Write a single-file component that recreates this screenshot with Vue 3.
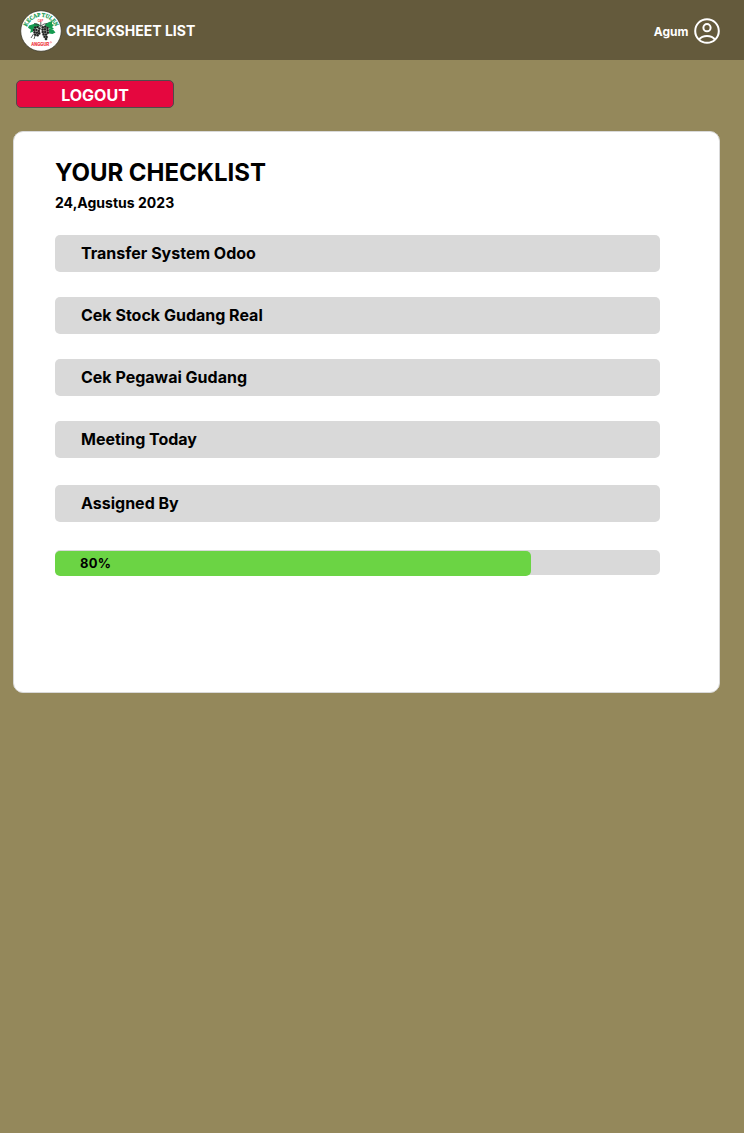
<script setup>
const tasks = [
  'Transfer System Odoo',
  'Cek Stock Gudang Real',
  'Cek Pegawai Gudang',
  'Meeting Today',
  'Assigned By',
]
const progress = 80
const fillWidth = '476px'
const grapes = [
  [15.2, 17.6], [17.6, 17], [19.4, 18.6], [14, 20], [16.4, 20], [18.8, 21], [14.6, 22.4], [17, 22.8],
  [19.2, 23.4], [15.2, 24.8], [17.6, 25.2],
  [22.8, 17.2], [25.2, 16.8], [27.4, 18], [22.6, 19.6], [25, 19.4], [27.6, 20.4], [22.8, 22], [25.2, 22],
  [27.8, 22.8], [23.6, 24.4], [26, 24.6], [24.6, 26.8], [26.6, 27], [26, 29],
]
</script>

<template>
  <div class="page">
    <header class="bar">
      <svg class="logo" viewBox="0 0 42 42" width="42" height="42">
        <defs>
          <path id="logo-arc" d="M6.6 17.6 A15 15 0 0 1 35.4 17.6" />
        </defs>
        <circle cx="21" cy="21" r="20.3" fill="#fff" stroke="#3c3a2c" stroke-width="0.8" />
        <text class="arc-text" text-anchor="middle" textLength="36.5" lengthAdjust="spacingAndGlyphs">
          <textPath href="#logo-arc" startOffset="50%">KECAP TULEN</textPath>
        </text>
        <text class="cap" x="20.5" y="11.9" text-anchor="middle">CAP</text>
        <g fill="#159a50">
          <path d="M9 15.5l4-1.2 3-1 3 1 1 2-3 1.5-3 1-1 3-3 1 1-3-3-2z" />
          <path d="M25 14.5l3-2 4-1.5 0 3 2 1-2 2 2 2-3 0-3-1-3-2z" />
          <path d="M29 18.5l4 1 2.5 3-3 1.5-3.5-.5z" />
        </g>
        <path d="M14 13.5l4 1 3 1.5 3-2 3-.5M20.8 12v5M13.5 24l-2.5 4M15 26l-1 3" fill="none" stroke="#333" stroke-width="0.8" />
        <circle v-for="(g, i) in grapes" :key="i" :cx="g[0]" :cy="g[1]" r="1.3" fill="#1d1d1d" stroke="#8b928b" stroke-width="0.2" />
        <text class="brand" x="20.3" y="35.8" text-anchor="middle" textLength="18" lengthAdjust="spacingAndGlyphs">ANGGUR</text>
        <circle cx="30.8" cy="32.3" r="0.7" fill="none" stroke="#ef3340" stroke-width="0.4" />
      </svg>
      <h1 class="title">CHECKSHEET LIST</h1>
      <span class="user">Agum</span>
      <svg class="avatar" viewBox="0 0 26 26" width="26" height="26" fill="none" stroke="#fff" stroke-width="2">
        <circle cx="13" cy="13" r="11.8" />
        <circle cx="13" cy="9.7" r="3.6" />
        <path d="M5 21.6C6.8 19.2 9.7 17.9 13 17.9s6.2 1.3 8 3.7" />
      </svg>
    </header>

    <button class="logout" type="button">LOGOUT</button>

    <main class="card">
      <h2 class="heading">YOUR CHECKLIST</h2>
      <p class="date">24,Agustus 2023</p>
      <ul class="tasks">
        <li v-for="task in tasks" :key="task" class="task">{{ task }}</li>
      </ul>
      <div class="track">
        <div class="fill" :style="{ width: fillWidth }">{{ progress }}%</div>
      </div>
    </main>
  </div>
</template>

<style>
body {
  margin: 0;
  background: #94885b;
}
</style>

<style scoped>
.page {
  box-sizing: border-box;
  min-height: 1133px;
  background: #94885b;
  font-family: Inter, "Liberation Sans", sans-serif;
  color: #000;
}
.bar {
  box-sizing: border-box;
  display: flex;
  align-items: center;
  height: 60px;
  padding: 2px 24px 0 20px;
  background: #645a3c;
  color: #fff;
}
.logo {
  flex: none;
}
.arc-text {
  font: 700 5.8px "Liberation Serif", serif;
  fill: #159a50;
  stroke: #159a50;
  stroke-width: 0.25px;
}
.cap {
  font: 700 2.6px "Liberation Sans", sans-serif;
  fill: #ef3340;
}
.brand {
  font: 700 6.1px "Liberation Sans", sans-serif;
  fill: #ef3340;
  stroke: #ef3340;
  stroke-width: 0.2px;
}
.title {
  margin: 0 auto 0 4px;
  padding-bottom: 2px;
  font-size: 14px;
  line-height: 17px;
  font-weight: 700;
}
.user {
  margin-right: 5.5px;
  font-size: 12px;
  line-height: 15px;
  font-weight: 700;
}
.avatar {
  flex: none;
}
.logout {
  display: block;
  box-sizing: border-box;
  width: 158px;
  height: 28px;
  margin: 20px 0 0 16px;
  padding: 2px 0 0;
  border: 1px solid #4f4b4b;
  border-radius: 5px;
  background: #e5073f;
  color: #fff;
  font: 700 16px/19px Inter, "Liberation Sans", sans-serif;
}
.card {
  box-sizing: border-box;
  width: 707px;
  height: 562px;
  margin: 23px 0 0 13px;
  padding: 26px 59px 0 41px;
  border: 1px solid #d9d9d9;
  border-radius: 10px;
  background: #fff;
}
.heading {
  margin: 0;
  font-size: 24px;
  line-height: 29px;
  font-weight: 700;
  letter-spacing: -0.03px;
}
.date {
  margin: 7px 0 0;
  font-size: 14px;
  line-height: 17px;
  font-weight: 700;
  letter-spacing: 0.02px;
}
.tasks {
  display: flex;
  flex-direction: column;
  gap: 25px;
  margin: 24px 0 0;
  padding: 0;
  list-style: none;
}
.task {
  height: 37px;
  padding-left: 26px;
  border-radius: 5px;
  background: #d9d9d9;
  font-size: 16px;
  line-height: 37px;
  font-weight: 700;
}
.task:last-child {
  margin-top: 2px;
}
.track {
  box-sizing: border-box;
  height: 25px;
  margin-top: 28px;
  padding-top: 1px;
  border-radius: 5px;
  background: #d9d9d9;
}
.fill {
  box-sizing: border-box;
  height: 25px;
  padding-left: 25px;
  border-radius: 5px;
  background: #6bd444;
  font-size: 13px;
  line-height: 24px;
  font-weight: 700;
  letter-spacing: 0.3px;
}
</style>
